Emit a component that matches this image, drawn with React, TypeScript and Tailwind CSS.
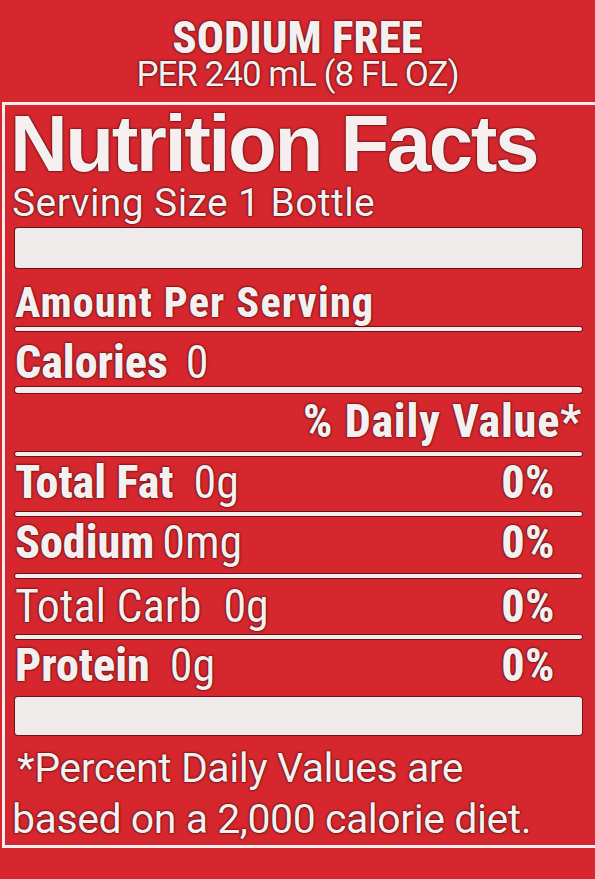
const rows = [
  { label: 'Total Fat', value: '0g', bold: true, gap: 'ml-[20px]', h: 'h-[56px]', pb: 'pb-[7px]' },
  { label: 'Sodium', value: '0mg', bold: true, gap: 'ml-[8px]', h: 'h-[58px]', pb: 'pb-[9px]' },
  { label: 'Total Carb', value: '0g', bold: false, gap: 'ml-[22px]', h: 'h-[57px]', pb: 'pb-[6px]' },
  { label: 'Protein', value: '0g', bold: true, gap: 'ml-[20px]', h: 'h-[58px]', pb: 'pb-[9px]' },
]

function Rule({ thick }: { thick?: boolean }) {
  return (
    <div
      className={
        (thick ? 'h-[6px]' : 'h-[4px]') +
        ' rounded-full bg-[#f4efee] shadow-[0_0_0_1px_#6e1216]'
      }
    />
  )
}

export default function App() {
  return (
    <div className="w-[595px] min-h-[879px] overflow-hidden bg-[#d6272e] font-['Roboto',sans-serif] [font-stretch:condensed] text-[#f5f0ef] [text-shadow:0_0_1px_#3d0709,0_0_2px_#5e0f12,0_0_3px_#7c161a]">
      {/* header */}
      <div className="pt-[17px] text-center">
        <div className="text-[45px] font-extrabold leading-[41px]">SODIUM FREE</div>
        <div className="text-[35px] leading-[34px] [font-stretch:normal] tracking-[-1px]">PER 240 mL (8 FL OZ)</div>
      </div>

      {/* label box */}
      <div className="mt-[10px] ml-[2px] border-t-[3px] border-l-[3px] border-b-[3px] border-[#f4efee] pt-[7px] pl-[10px] pr-[13px]">
        <div className="-ml-[5px] font-['Liberation_Sans',Arial,sans-serif] [font-stretch:normal] text-[80px] font-bold leading-[64px] tracking-[-2.5px] whitespace-nowrap">
          Nutrition Facts
        </div>
        <div className="mt-[7px] -ml-[3px] text-[39px] leading-[40px] [font-stretch:normal] tracking-[0.4px]">
          Serving Size 1 Bottle
        </div>

        <div className="mt-[5px] h-[40px] rounded-[3px] bg-[#eeebea] shadow-[0_0_0_1px_#6e1216]" />

        <div className="flex h-[59px] items-end pb-[3px]">
          <span className="text-[42px] font-extrabold leading-none tracking-[1.2px]">Amount Per Serving</span>
        </div>
        <Rule />

        <div className="flex h-[56px] items-end pb-[2px] text-[46px] leading-none">
          <span className="font-extrabold">Calories</span>
          <span className="ml-[18px]">0</span>
        </div>
        <Rule thick />

        <div className="flex h-[59px] items-end justify-end pb-[8px] text-[46px] leading-none">
          <span className="font-extrabold tracking-[0.8px]">% Daily Value*</span>
        </div>
        <Rule />

        {rows.map((r, i) => (
          <div key={r.label}>
            <div className={'flex items-end justify-between text-[46px] leading-none ' + r.h + ' ' + r.pb}>
              <span>
                <span className={r.bold ? 'font-extrabold' : ''}>{r.label}</span>
                <span className={r.gap}>{r.value}</span>
              </span>
              <span className="mr-[27px] font-extrabold tracking-[0.5px]">0%</span>
            </div>
            {i < rows.length - 1 && <Rule />}
          </div>
        ))}

        <div className="h-[38px] rounded-[3px] bg-[#eeebea] shadow-[0_0_0_1px_#6e1216]" />

        <div className="mt-[8px] text-[41px] leading-[51px] [font-stretch:normal] tracking-[-0.45px]">
          <div className="ml-[2px]">*Percent Daily Values are</div>
          <div className="-ml-[3px]">based on a 2,000 calorie diet.</div>
        </div>
      </div>
    </div>
  )
}
